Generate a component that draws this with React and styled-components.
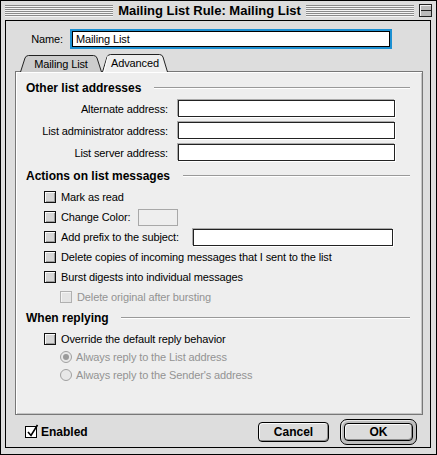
import React from 'react';
import styled, { createGlobalStyle } from 'styled-components';

const GlobalStyle = createGlobalStyle`
  body {
    margin: 0;
    background: #ffffff;
  }
  * {
    box-sizing: border-box;
  }
`;

// Outer window with black edge and gray frame
const Window = styled.div`
  width: 437px;
  height: 455px;
  border: 1px solid #000;
  background: #dddddd;
  display: flex;
  flex-direction: column;
  font-family: 'Liberation Sans', Arial, sans-serif;
  font-size: 11px;
  letter-spacing: -0.12px;
  color: #000;
`;

const TitleBar = styled.div`
  height: 19px;
  display: flex;
  align-items: center;
  padding: 0 4px 0 4px;
`;

// Pinstripes left and right of the title
const Stripes = styled.div`
  flex: 1;
  height: 12px;
  background: repeating-linear-gradient(
    to bottom,
    #8a8a8a 0,
    #8a8a8a 1px,
    #f4f4f4 1px,
    #f4f4f4 2px
  );
`;

const Title = styled.div`
  font-weight: bold;
  font-size: 13px;
  letter-spacing: 0;
  padding: 0 5px;
  white-space: nowrap;
`;

const CollapseBox = styled.div`
  width: 13px;
  height: 13px;
  margin-left: 5px;
  border: 1px solid #222;
  background: linear-gradient(to bottom, #bbb 0, #bbb 5px, #222 5px, #222 6px, #bbb 6px);
  box-shadow: inset 1px 1px 0 #f4f4f4;
`;

const Body = styled.div`
  flex: 1;
  margin: 0 5px 6px 4px;
  border: 1px solid #000;
  background: #dddddd;
  display: flex;
  flex-direction: column;
  padding-top: 8px;
`;

const NameRow = styled.div`
  display: flex;
  align-items: center;
  padding-left: 17px;
  height: 20px;
`;

const NameLabel = styled.span`
  width: 40px;
  text-align: right;
  margin-right: 9px;
`;

const FocusedInput = styled.div`
  width: 318px;
  height: 16px;
  border: 1px solid #000;
  background: #fff;
  box-shadow: 0 0 0 2px #1c90d2;
  padding-left: 3px;
  line-height: 14px;
`;

const TabRow = styled.div`
  display: flex;
  align-items: flex-end;
  margin: 5px 0 -1px 14px;
  position: relative;
  z-index: 1;
`;

const Tab = styled.div`
  position: relative;
  width: ${(p) => p.$width}px;
  height: ${(p) => (p.$active ? 18 : 17)}px;
  display: flex;
  align-items: center;
  justify-content: center;
  padding-bottom: ${(p) => (p.$active ? 1 : 0)}px;

  svg {
    position: absolute;
    inset: 0;
  }

  span {
    position: relative;
  }
`;

const Panel = styled.div`
  margin: 0 7px 0 9px;
  height: 344px;
  border: 1px solid #777;
  background: #eeeeee;
  box-shadow: inset 1px 1px 0 #fff, inset -1px -1px 0 #c4c4c4;
  padding: 9px 12px 0 10px;
  display: flex;
  flex-direction: column;
`;

const SectionHead = styled.div`
  display: flex;
  align-items: center;
  height: 14px;
  margin-top: ${(p) => p.$top || 0}px;
  font-weight: bold;
  font-size: 12px;
  letter-spacing: 0;
`;

const Rule = styled.div`
  flex: 1;
  margin-left: ${(p) => p.$gap}px;
  border-top: 1px solid #999;
  border-bottom: 1px solid #fff;
`;

const AddressGrid = styled.div`
  display: grid;
  grid-template-columns: 142px 217px;
  column-gap: 10px;
  row-gap: 5px;
  margin-top: 5px;
  align-items: center;
`;

const FieldLabel = styled.span`
  text-align: right;
`;

const TextField = styled.div`
  width: ${(p) => p.$width || 217}px;
  height: 17px;
  border: 1px solid #222;
  background: #fff;
  box-shadow: -1px -1px 0 #aaa, 1px 1px 0 #fff;
`;

const OptionList = styled.div`
  display: flex;
  flex-direction: column;
  margin-top: ${(p) => p.$top}px;
`;

const OptionRow = styled.div`
  display: flex;
  align-items: center;
  height: ${(p) => p.$h || 20}px;
  padding-left: ${(p) => p.$indent}px;
  color: ${(p) => (p.$disabled ? '#939393' : '#000')};
`;

const Check = styled.span`
  width: 12px;
  height: 12px;
  flex: none;
  border: 1px solid ${(p) => (p.$disabled ? '#b0b0b0' : '#111')};
  background: ${(p) => (p.$disabled ? '#e4e4e4' : '#d6d6d6')};
  box-shadow: ${(p) =>
    p.$disabled
      ? 'inset 1px 1px 0 #f4f4f4'
      : 'inset 1px 1px 0 #fafafa, inset -1px -1px 0 #9a9a9a'};
  margin-right: 5px;
`;

const Radio = styled.span`
  width: 12px;
  height: 12px;
  flex: none;
  border-radius: 50%;
  border: 1px solid #a0a0a0;
  background: #e8e8e8;
  margin-right: 4px;
  display: flex;
  align-items: center;
  justify-content: center;

  &::after {
    content: '';
    width: 6px;
    height: 6px;
    border-radius: 50%;
    background: ${(p) => (p.$on ? '#9a9a9a' : 'transparent')};
  }
`;

const Swatch = styled.div`
  width: 40px;
  height: 17px;
  margin-left: 8px;
  border: 1px solid #a8a8a8;
  background: #eeeeee;
`;

const InlineField = styled(TextField)`
  margin-left: 14px;
`;

const Footer = styled.div`
  flex: 1;
  display: flex;
  align-items: center;
  padding: 2px 13px 0 19px;
`;

const EnabledBox = styled.label`
  display: flex;
  align-items: center;
  font-weight: bold;
  font-size: 12px;
  letter-spacing: 0;
  gap: 4px;
  margin-right: auto;
`;

const CheckedBox = styled.span`
  width: 12px;
  height: 12px;
  border: 1px solid #000;
  background: #fff;
  position: relative;

  svg {
    position: absolute;
    left: 0;
    top: -3px;
  }
`;

const Button = styled.div`
  width: 71px;
  height: 20px;
  border: 1px solid #000;
  border-radius: 4px;
  background: #dcdcdc;
  box-shadow: inset 1px 1px 0 #fafafa, inset -1px -1px 0 #8e8e8e;
  display: flex;
  align-items: center;
  justify-content: center;
  font-weight: bold;
  font-size: 12px;
  letter-spacing: 0;
`;

const DefaultRing = styled.div`
  margin-left: 11px;
  padding: 3px;
  border: 1px solid #000;
  border-radius: 7px;
  background: #bdbdbd;
  box-shadow: inset 1px 1px 0 #e8e8e8;
`;

const DefaultButton = styled(Button)`
  width: 69px;
  height: 18px;
  border-radius: 4px;
`;

const TabShape = ({ width, height, active }) => (
  <svg width={width} height={height} viewBox={`0 0 ${width} ${height}`}>
    <path
      d={`M0.5 ${height} L5 3 Q6 0.5 8.5 0.5 L${width - 8.5} 0.5 Q${width - 6} 0.5 ${width - 5} 3 L${width - 0.5} ${height}`}
      fill={active ? '#eeeeee' : '#cccccc'}
      stroke="#222"
      strokeWidth="1"
    />
    {active && <path d={`M6 2 L2 ${height}`} stroke="#fff" />}
  </svg>
);

const App = () => {
  return (
    <>
      <GlobalStyle />
      <Window>
        <TitleBar>
          <Stripes />
          <Title>Mailing List Rule: Mailing List</Title>
          <Stripes />
          <CollapseBox />
        </TitleBar>
        <Body>
          <NameRow>
            <NameLabel>Name:</NameLabel>
            <FocusedInput>Mailing List</FocusedInput>
          </NameRow>
          <TabRow>
            <Tab $width={82}>
              <TabShape width={82} height={17} />
              <span>Mailing List</span>
            </Tab>
            <Tab $width={66} $active>
              <TabShape width={66} height={18} active />
              <span>Advanced</span>
            </Tab>
          </TabRow>
          <Panel>
            <SectionHead>
              Other list addresses
              <Rule $gap={13} />
            </SectionHead>
            <AddressGrid>
              <FieldLabel>Alternate address:</FieldLabel>
              <TextField />
              <FieldLabel>List administrator address:</FieldLabel>
              <TextField />
              <FieldLabel>List server address:</FieldLabel>
              <TextField />
            </AddressGrid>

            <SectionHead $top={8}>
              Actions on list messages
              <Rule $gap={13} />
            </SectionHead>
            <OptionList $top={4}>
              <OptionRow $indent={18}>
                <Check />
                Mark as read
              </OptionRow>
              <OptionRow $indent={18}>
                <Check />
                Change Color:
                <Swatch />
              </OptionRow>
              <OptionRow $indent={18}>
                <Check />
                Add prefix to the subject:
                <InlineField $width={200} />
              </OptionRow>
              <OptionRow $indent={18}>
                <Check />
                Delete copies of incoming messages that I sent to the list
              </OptionRow>
              <OptionRow $indent={18}>
                <Check />
                Burst digests into individual messages
              </OptionRow>
              <OptionRow $indent={34} $disabled>
                <Check $disabled />
                Delete original after bursting
              </OptionRow>
            </OptionList>

            <SectionHead $top={4}>
              When replying
              <Rule $gap={12} />
            </SectionHead>
            <OptionList $top={4}>
              <OptionRow $indent={18} $h={19}>
                <Check />
                Override the default reply behavior
              </OptionRow>
              <OptionRow $indent={34} $h={18} $disabled>
                <Radio $on />
                Always reply to the List address
              </OptionRow>
              <OptionRow $indent={34} $h={18} $disabled>
                <Radio />
                Always reply to the Sender's address
              </OptionRow>
            </OptionList>
          </Panel>
          <Footer>
            <EnabledBox>
              <CheckedBox>
                <svg width="14" height="14" viewBox="0 0 14 14">
                  <path d="M2 8 L5 11.5 L11.5 1" fill="none" stroke="#000" strokeWidth="1.6" />
                </svg>
              </CheckedBox>
              Enabled
            </EnabledBox>
            <Button>Cancel</Button>
            <DefaultRing>
              <DefaultButton>OK</DefaultButton>
            </DefaultRing>
          </Footer>
        </Body>
      </Window>
    </>
  );
};

export default App;
